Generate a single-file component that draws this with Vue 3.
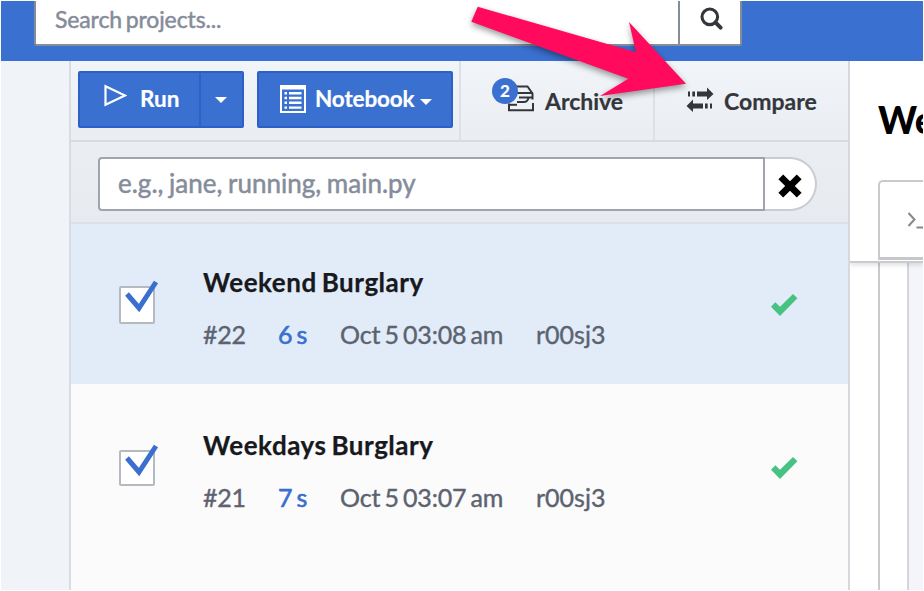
<script setup>
const runs = [
  { name: 'Weekend Burglary', id: '#22', duration: '6 s', date: 'Oct 5 03:08 am', host: 'r00sj3', selected: true },
  { name: 'Weekdays Burglary', id: '#21', duration: '7 s', date: 'Oct 5 03:07 am', host: 'r00sj3', selected: false },
]
</script>

<template>
  <div class="frame">
    <header class="topbar">
      <div class="search">
        <div class="search-input"><span class="t-search">Search projects...</span></div>
        <div class="search-btn">
          <svg width="24" height="24" viewBox="0 0 24 24" fill="none" stroke="#33363b">
            <circle cx="9.8" cy="9.8" r="7.8" stroke-width="3.1" />
            <path d="M15.4 15.4 20.600 20.600" stroke-width="4" stroke-linecap="round" />
          </svg>
        </div>
      </div>
    </header>
    <div class="main">
      <div class="gutter"></div>
      <section class="panel">
        <div class="toolbar">
          <div class="btn run">
            <div class="run-main">
              <svg width="24" height="24" viewBox="0 0 24 24" fill="none" stroke="#fff" stroke-width="2.2">
                <path d="M2.5 2.3V20.7L22 11.5Z" />
              </svg>
              <span class="t-run">Run</span>
            </div>
            <div class="run-more"><i class="caret"></i></div>
          </div>
          <div class="btn notebook">
            <svg width="26" height="28" viewBox="0 0 26 28">
              <path fill="#fff" fill-rule="evenodd" d="M0 0H26V28H0ZM2 4.5V26H24V4.5Z" />
              <path stroke="#fff" stroke-width="2.4" d="M4.5 8.3H7M4.5 13H7M4.5 17.8H7M4.5 22.6H7M9 8.3H21.5M9 13H21.5M9 17.8H21.5M9 22.6H21.5" />
            </svg>
            <span class="t-notebook">Notebook</span>
            <i class="caret"></i>
          </div>
          <div class="tool archive">
            <div class="archive-icon">
              <svg width="28" height="28" viewBox="0 0 28 28" fill="none" stroke="#33363b" stroke-width="2">
                <path d="M2 19.500V26.200H26V19" />
                <path d="M8 2.500H20.500L25.500 9.500V15.500" />
                <path d="M10 9H25.500M12 13.500H25.500M10 18H17Q20.500 18 21.500 14" />
                <path d="M2 20.800H10" />
              </svg>
              <span class="badge">2</span>
            </div>
            <span class="t-archive">Archive</span>
          </div>
          <div class="tool compare">
            <svg width="28" height="26" viewBox="0 0 28 26" fill="#33363b">
              <path d="M2 4.5H4V9.500H2ZM6.300 4.500H9V9.500H6.300ZM11 4.500H21V.500L27.500 7 21 13V9.500H11Z" />
              <path d="M26 16.500H24V21.500H26ZM21.700 16.500H19V21.500H21.700ZM17 16.500H7V12.500L.500 19 7 25V21.500H17Z" />
            </svg>
            <span class="t-compare">Compare</span>
          </div>
        </div>
        <div class="filter">
          <div class="filter-input"><span class="t-filter">e.g., jane, running, main.py</span></div>
          <div class="filter-clear">
            <svg width="24" height="24" viewBox="0 0 24 24" stroke="#000" stroke-width="6.8">
              <path d="M2.800 2.800 21.200 21.200M21.200 2.800 2.800 21.200" />
            </svg>
          </div>
        </div>
        <div v-for="run in runs" :key="run.id" class="row" :class="{ selected: run.selected }">
          <div class="check">
            <svg width="34" height="36" viewBox="0 0 34 36" fill="none" stroke="#3a6fd0" stroke-width="5">
              <path d="M2 14 14 28 31 2" />
            </svg>
          </div>
          <div class="info">
            <div class="name"><span>{{ run.name }}</span></div>
            <div class="meta">
              <span class="m-id">{{ run.id }}</span>
              <span class="m-dur">{{ run.duration }}</span>
              <span class="m-date">{{ run.date }}</span>
              <span class="m-host">{{ run.host }}</span>
            </div>
          </div>
          <svg class="ok" width="28" height="24" viewBox="0 0 28 24">
            <path fill="#47c283" d="M1 13.700 5.300 9.300 10 13.700 23 1 27.400 5.300 10 23Z" />
          </svg>
        </div>
      </section>
      <section class="detail">
        <div class="detail-head">
          <div class="title">We</div>
          <div class="tab">
            <svg width="18" height="20" viewBox="0 0 18 20" fill="none" stroke="#85888e" stroke-width="2">
              <path d="M1.500 2 7.500 8.500 1.500 15M9.500 16.500H18" />
            </svg>
          </div>
        </div>
        <div class="detail-body">
          <div class="margin"></div>
          <div class="lines"></div>
          <div class="code"></div>
        </div>
      </section>
    </div>
    <svg class="arrow" width="230" height="110" viewBox="465 0 230 110">
      <path fill="#ff0a5c" d="M477.700 6.700 471.300 21.700 628.300 78.700 600 96 686 83.700 629 22 636 52.300Z" />
    </svg>
  </div>
</template>

<style>
body { background: #fff; overflow: hidden; }
</style>

<style scoped>
* { box-sizing: border-box; }
.frame {
  position: relative; width: 924px; height: 591px; padding: 1px; overflow: hidden;
  display: flex; flex-direction: column; background: #fff;
  font-family: Lato, "Liberation Sans", sans-serif; color: #33363b;
}
span { white-space: nowrap; }
.topbar { flex: none; height: 60px; background: #3a70d0; padding-left: 33px; }
.search { display: flex; width: 708px; height: 45px; background: #fff; border: 2px solid #858d98; border-top: 0; border-radius: 0 0 3px 3px; }
.search-input { width: 644px; border-right: 2px solid #858d98; padding-left: 19px; line-height: 37px; font-size: 23px; letter-spacing: -.12px; word-spacing: -2px; color: #858c9a; -webkit-text-stroke: .5px; }
.search-btn { padding: 6px 0 0 20px; }
.main { flex: 1; display: flex; min-height: 0; }
.gutter { width: 68px; background: #f0f3f7; }
.panel { width: 781px; border-left: 2px solid #d9dce1; border-right: 2px solid #d6d8dd; background: #fbfbfb; }
.toolbar { height: 81px; display: flex; border-bottom: 2px solid #d8dce1; background: linear-gradient(#f1f4f8, #eaedf2); }
.btn { display: flex; height: 57px; margin-top: 10px; border: 2px solid #2d5fc9; border-radius: 2px; background: #3a70d0; color: #fff; font-weight: 700; font-size: 22.500px; line-height: 51px; }
.run { width: 166px; margin-left: 7px; }
.run-main { display: flex; width: 121px; border-right: 2px solid #2f62c9; padding-left: 23px; }
.run-main svg { margin-top: 11px; margin-right: 13px; }
.run-more { padding: 24px 0 0 14px; line-height: 0; }
.caret { display: block; width: 0; height: 0; border: 6px solid transparent; border-top: 6px solid #fff; border-bottom: 0; }
.t-run, .t-notebook { -webkit-text-stroke: .2px; }
.t-notebook { letter-spacing: -.15px; }
.notebook { width: 196px; margin-left: 13px; padding-left: 21px; }
.notebook svg { margin: 12px 9px 0 0; }
.notebook .caret { margin: 26px 0 0 6px; }
.tool { display: flex; border-left: 2px solid #dde0e5; font-size: 23px; font-weight: 700; line-height: 80px; -webkit-text-stroke: .2px; }
.archive { width: 194px; margin-left: 6px; padding-left: 46px; }
.archive-icon { position: relative; width: 28px; height: 28px; margin: 23px 10px 0 0; }
.archive-icon svg { display: block; }
.badge { position: absolute; left: -15px; top: -6px; width: 26px; height: 26px; border-radius: 50%; background: #3a70d0; color: #fff; font-size: 17px; line-height: 25px; text-align: center; }
.compare { padding-left: 31px; }
.compare svg { margin: 26px 10px 0 0; }
.filter { display: flex; height: 82px; padding: 15px 0 0 27px; border-bottom: 2px solid #dce1e8; background: linear-gradient(#eaedf2, #e7eaef); }
.filter-input { width: 667px; height: 54px; border: 2px solid #a0a4ab; border-radius: 4px 0 0 4px; background: #fff; padding-left: 18px; line-height: 48px; font-size: 26px; word-spacing: -1px; color: #858c9a; -webkit-text-stroke: .5px; }
.filter-clear { width: 52px; height: 54px; border: 2px solid #c9ccd3; border-left: 0; border-radius: 0 27px 27px 0; background: #fff; padding: 15px 0 0 13px; }
.row { display: flex; height: 162px; padding-left: 48px; }
.row.selected { height: 160px; background: #e2ecf8; }
.check { width: 36px; height: 38px; margin-top: 62px; border: 2px solid #b5bac0; border-radius: 2px; background: #fff; }
.row:not(.selected) .check { height: 36px; margin-top: 66px; }
.check svg { display: block; margin: -8px 0 0 4px; overflow: visible; }
.info { width: 520px; margin: 38px 0 0 48px; }
.row:not(.selected) .info { margin-top: 41px; }
.name { height: 40px; line-height: 40px; font-size: 26px; letter-spacing: .52px; word-spacing: -1.800px; font-weight: 700; color: #17191d; -webkit-text-stroke: .25px; }
.meta { display: flex; height: 40px; margin-top: 13px; line-height: 39px; font-size: 25px; letter-spacing: -.2px; word-spacing: -1.900px; color: #5c6370; -webkit-text-stroke: .4px; }
.m-id { width: 75px; }
.m-dur { width: 62px; color: #3a6fd0; -webkit-text-stroke: .6px; }
.m-date { width: 196px; }
.m-host { letter-spacing: 0; }
.ok { margin: 69px 0 0 47px; }
.row:not(.selected) .ok { margin-top: 72px; }
.detail { flex: 1; min-width: 0; overflow: hidden; display: flex; flex-direction: column; }
.detail-head { position: relative; flex: none; height: 202px; padding-left: 28px; background: #fff; border-bottom: 2px solid #c9cbce; box-shadow: 0 2px 5px #0002; }
.title { height: 119px; line-height: 118px; font-size: 37px; font-weight: 900; color: #000; white-space: nowrap; }
.tab { width: 80px; height: 80px; border: 2px solid #c8cacd; border-bottom: 3px solid #c5c7cb; border-right: 0; border-radius: 5px 0 0 0; padding: 29px 0 0 27px; }
.detail-body { flex: 1; display: flex; }
.margin { width: 28px; }
.lines { width: 31px; border-left: 2px solid #c8cacd; border-right: 2px solid #d4d4da; }
.code { flex: 1; background: #f4f5fa; }
.arrow { position: absolute; left: 465px; top: 0; filter: drop-shadow(0 3px 3px #0006); }
</style>
